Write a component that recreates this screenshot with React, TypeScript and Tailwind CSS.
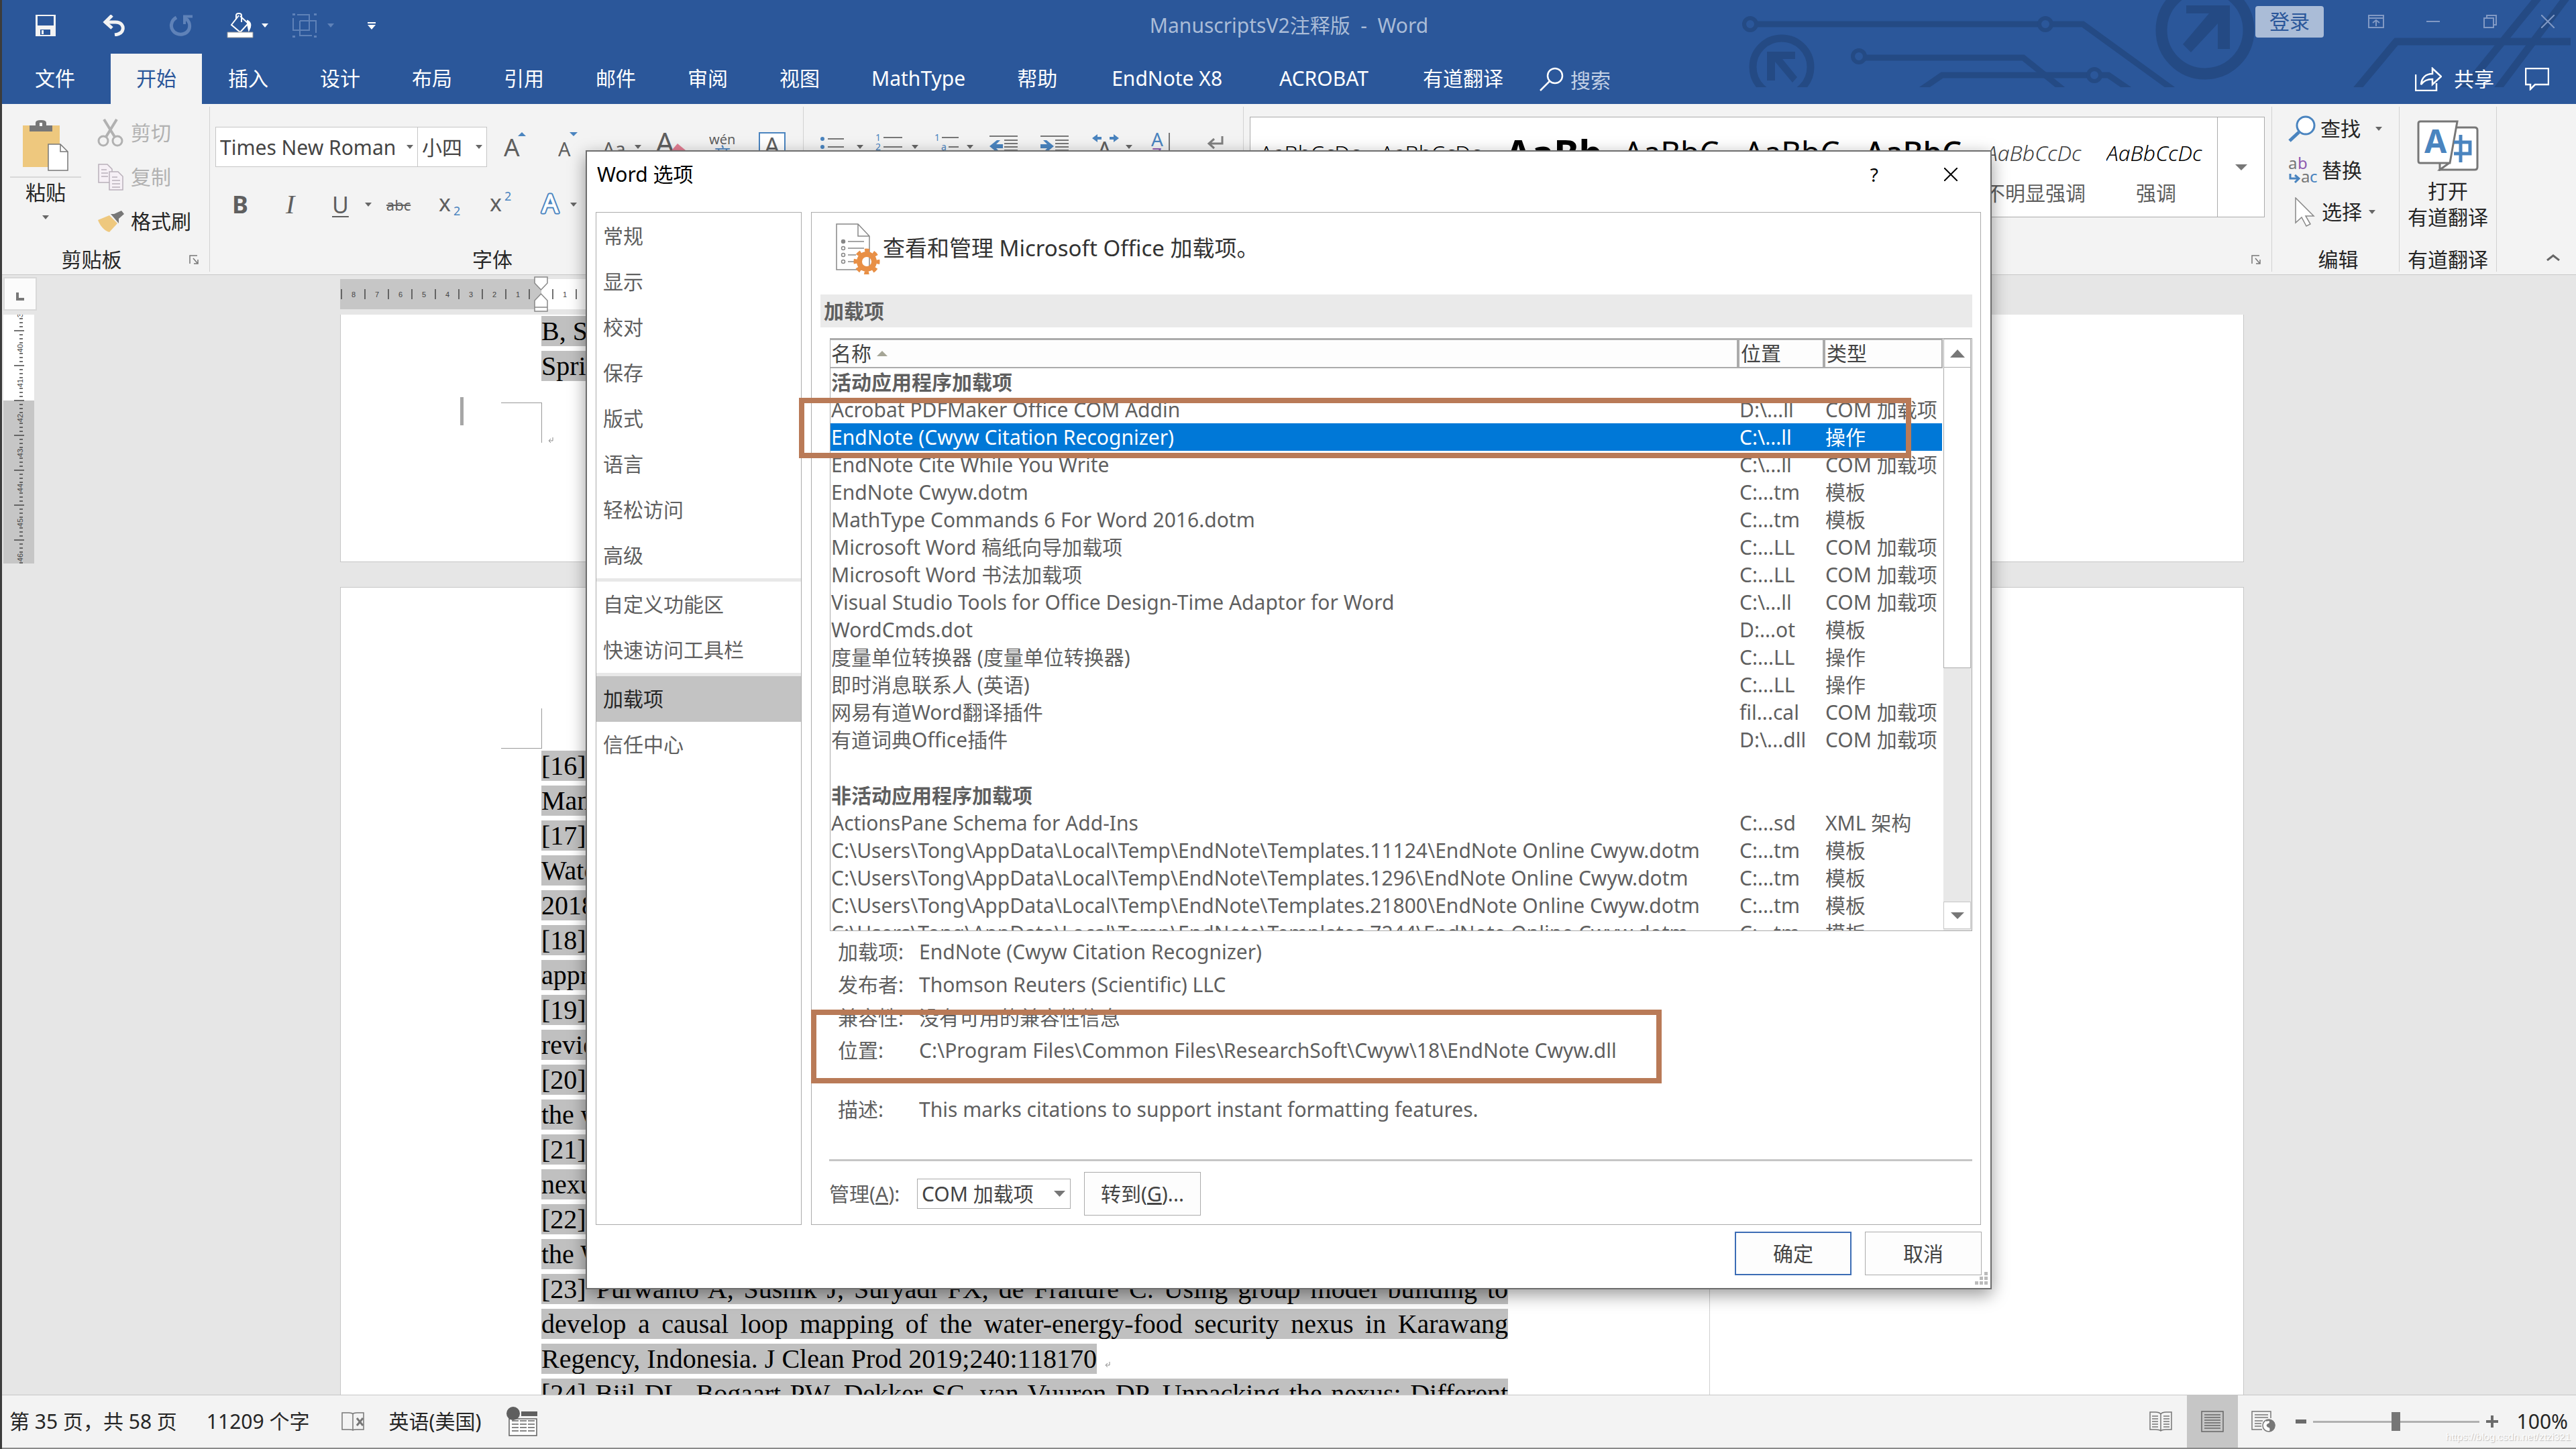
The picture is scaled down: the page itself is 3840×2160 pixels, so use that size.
import { useState } from "react"
import type { ReactNode } from "react"

const ui = "font-['Noto_Sans','Noto_Sans_CJK_SC',sans-serif]"

const tabs = ["插入", "设计", "布局", "引用", "邮件", "审阅", "视图", "MathType", "帮助", "EndNote X8", "ACROBAT", "有道翻译"]

const navGroups = [
  ["常规", "显示", "校对", "保存", "版式", "语言", "轻松访问", "高级"],
  ["自定义功能区", "快速访问工具栏"],
  ["加载项", "信任中心"],
]

const activeAddins = [
  ["Acrobat PDFMaker Office COM Addin", "D:\\...ll", "COM 加载项"],
  ["EndNote (Cwyw Citation Recognizer)", "C:\\...ll", "操作"],
  ["EndNote Cite While You Write", "C:\\...ll", "COM 加载项"],
  ["EndNote Cwyw.dotm", "C:...tm", "模板"],
  ["MathType Commands 6 For Word 2016.dotm", "C:...tm", "模板"],
  ["Microsoft Word 稿纸向导加载项", "C:...LL", "COM 加载项"],
  ["Microsoft Word 书法加载项", "C:...LL", "COM 加载项"],
  ["Visual Studio Tools for Office Design-Time Adaptor for Word", "C:\\...ll", "COM 加载项"],
  ["WordCmds.dot", "D:...ot", "模板"],
  ["度量单位转换器 (度量单位转换器)", "C:...LL", "操作"],
  ["即时消息联系人 (英语)", "C:...LL", "操作"],
  ["网易有道Word翻译插件", "fil...cal", "COM 加载项"],
  ["有道词典Office插件", "D:\\...dll", "COM 加载项"],
]

const inactiveAddins = [
  ["ActionsPane Schema for Add-Ins", "C:...sd", "XML 架构"],
  ["C:\\Users\\Tong\\AppData\\Local\\Temp\\EndNote\\Templates.11124\\EndNote Online Cwyw.dotm", "C:...tm", "模板"],
  ["C:\\Users\\Tong\\AppData\\Local\\Temp\\EndNote\\Templates.1296\\EndNote Online Cwyw.dotm", "C:...tm", "模板"],
  ["C:\\Users\\Tong\\AppData\\Local\\Temp\\EndNote\\Templates.21800\\EndNote Online Cwyw.dotm", "C:...tm", "模板"],
  ["C:\\Users\\Tong\\AppData\\Local\\Temp\\EndNote\\Templates.7244\\EndNote Online Cwyw.dotm", "C:...tm", "模板"],
]

const references = [
  "[16]", "Man", "[17]", "Water", "2018;", "[18]", "appro", "[19]", "review", "[20]", "the w", "[21]", "nexus", "[22]", "the W",
]

function Arrow({ className = "text-[#666]" }: { className?: string }) {
  return (
    <svg className={"h-[6px] w-[10px] shrink-0 " + className} viewBox="0 0 10 6" fill="currentColor">
      <path d="M0 0h10L5 6z" />
    </svg>
  )
}

function Letter({ x, y, size, fill = "#5f5f5f", children, bold, italic }: any) {
  return (
    <text x={x} y={y} fontSize={size} fill={fill} fontFamily="Noto Sans, Noto Sans CJK SC, sans-serif" fontWeight={bold ? 700 : 400} fontStyle={italic ? "italic" : "normal"}>
      {children}
    </text>
  )
}

function Tool({ label, className, children }: { label: string; className: string; children: ReactNode }) {
  return (
    <button aria-label={label} className={"flex h-[60px] shrink-0 items-center " + className}>
      {children}
    </button>
  )
}

function HeaderArt() {
  return (
    <svg className="absolute right-0 top-0 h-[130px] w-[1250px]" viewBox="2590 0 1250 130" fill="none" stroke="#244a84" strokeWidth="9">
      <circle cx="2609" cy="36" r="9" strokeWidth="6" />
      <path d="M2618 36H3040M3058 36H3105L3240 134" />
      <circle cx="3049" cy="36" r="9" strokeWidth="6" />
      <circle cx="2656" cy="100" r="43" strokeWidth="11" />
      <path d="M2634 77h42v11h-19l22 27-7 8-26-31v28h-12z" fill="#244a84" stroke="none" />
      <circle cx="2771" cy="84" r="9" strokeWidth="6" />
      <path d="M2780 86H3016L3076 134" />
      <path d="M2863 134L2895 112H3113M3131 112H3143L3175 134" />
      <circle cx="3122" cy="112" r="9" strokeWidth="6" />
      <circle cx="3287" cy="45" r="65" strokeWidth="17" />
      <path d="M3259 8h65v65h-18V35l-40 43-12-12 39-46h-34z" fill="#244a84" stroke="none" />
      <path d="M3512 134L3572 62H3832M3672 134L3784 -4M3722 134L3826 -4" strokeWidth="11" />
    </svg>
  )
}

function TitleBar() {
  return (
    <header className="relative shrink-0 bg-[#2b579a] text-white">
      <HeaderArt />
      <div className="relative grid h-20 grid-cols-[1fr_auto_1fr] items-center pb-1">
        <div className="flex items-center pl-[49px]">
          <button aria-label="保存">
            <svg className="h-8 w-8" viewBox="0 0 32 32"><path d="M1 0h30v32H1z" fill="#f3f3f3" /><path d="M4 2h24v14H4zM8 22h15v8H8z" fill="#2b579a" /><path d="M10 23h3v6h-3z" fill="#f3f3f3" /></svg>
          </button>
          <button aria-label="撤消" className="ml-[68px]">
            <svg className="h-8 w-9" viewBox="0 0 36 32" fill="none" stroke="#f3f3f3" strokeWidth="5"><path d="M4 11H20C30 11 32 18 31 22 30 27 26 29 19 30" /><path d="M15 1L5 11L15 20" /></svg>
          </button>
          <button aria-label="恢复" className="ml-[64px]">
            <svg className="h-8 w-9" viewBox="0 0 36 32" fill="none" stroke="#5f82b8" strokeWidth="5"><path d="M11 4C2 9 1 20 8 26 16 32 27 29 30 21 32 14 29 8 24 5" /><path d="M35 2.500H23V14" strokeWidth="4" /></svg>
          </button>
          <button aria-label="填充" className="ml-[50px] flex items-center gap-3">
            <svg className="h-[38px] w-[40px]" viewBox="0 0 40 38" fill="none" stroke="#fff" strokeWidth="2"><path d="M14 10V4c0-4 8-4 8 0v10M18 4L7 18l13 11 12-13L20 5" /><path d="M31 12c6 3 5 9 2 14l-2-9z" fill="#fff" /><path d="M1 29h38v8H1z" fill="#fff" stroke="#999" strokeWidth="1" /></svg>
            <Arrow className="text-white" />
          </button>
          <button aria-label="组合" className="ml-[36px] flex items-center gap-4">
            <svg className="h-9 w-9" viewBox="0 0 36 36" fill="none" stroke="#5f82b8" strokeWidth="2"><path d="M1 7v18h24V2H7M11 11h24v18M11 11v22h18" /><path d="M0 1h4M32 1h4M0 35h4M32 35h4" strokeWidth="4" /></svg>
            <Arrow className="text-[#5f82b8]" />
          </button>
          <button aria-label="自定义快速访问工具栏" className="ml-[50px]">
            <svg className="h-[11px] w-3" viewBox="0 0 12 11" fill="#fff"><path d="M0 0h12v2H0zM0 4h12L6 11z" /></svg>
          </button>
        </div>
        <h1 className="whitespace-pre text-[30px] leading-10 text-[#aabcd7]">ManuscriptsV2注释版  -  Word</h1>
        <div className="flex items-center justify-end pr-8 text-[#8199c4]">
          <button className="mb-3 h-[47px] w-[102px] rounded-sm bg-[#aabcd7] text-[30px] leading-10 text-[#2b579a]">登录</button>
          <div className="mb-3 flex items-center">
            <svg className="ml-[66px] h-5 w-6" viewBox="0 0 24 20" fill="none" stroke="currentColor" strokeWidth="2"><path d="M1 1h22v18H1zM1 5h22M12 17V9M7 12l5-4 5 4" /></svg>
            <svg className="ml-[63px] h-5 w-5" viewBox="0 0 20 20" stroke="currentColor" strokeWidth="2"><path d="M0 10h20" /></svg>
            <svg className="ml-[65px] h-5 w-5" viewBox="0 0 20 20" fill="none" stroke="currentColor" strokeWidth="2"><path d="M1 5h14v14H1zM5 5V1h14v14h-4" /></svg>
            <svg className="ml-[66px] h-5 w-5" viewBox="0 0 20 20" stroke="currentColor" strokeWidth="2"><path d="M0 0l20 20M20 0L0 20" /></svg>
          </div>
        </div>
      </div>
      <nav className="relative flex h-[75px] items-stretch text-[30px] leading-10">
        <button className="w-[162px] pb-0.5 pr-1">文件</button>
        <button className="mr-px bg-[#f3f3f3] px-[38px] pb-0.5 text-[#2b579a]">开始</button>
        <div className="flex gap-px">
          {tabs.map((tab) => (
            <button key={tab} className={"pb-0.5 " + (tab.length > 6 && tab !== "MathType" ? "px-[42px]" : "px-[38px]")}>{tab}</button>
          ))}
        </div>
        <button className="flex items-center gap-2.5 pl-4 text-[#c3d0e5]">
          <svg className="h-9 w-9" viewBox="0 0 36 36" fill="none" stroke="#fff" strokeWidth="2.500"><circle cx="23" cy="13" r="11" /><path d="M15 21L1 35" /></svg>
          <span className="pt-1">搜索</span>
        </button>
        <div className="ml-auto flex items-center gap-[46px] pr-10">
          <button className="flex items-center gap-[18px]">
            <svg className="h-9 w-10" viewBox="0 0 40 36" fill="none" stroke="#fff" strokeWidth="2.500"><path d="M1 11v24h31V24" /><path d="M9 26c1-10 7-16 17-16V2l13 12-13 12v-8c-8 0-13 2-17 8z" /></svg>
            共享
          </button>
          <svg className="h-[34px] w-9" viewBox="0 0 36 34" fill="none" stroke="#fff" strokeWidth="2.500"><path d="M1 1h34v24H15l-7 7v-7H1z" /></svg>
        </div>
      </nav>
    </header>
  )
}

function Group({ label, className, launcher, children }: { label: string; className: string; launcher?: boolean; children: ReactNode }) {
  return (
    <section className={"my-1 flex flex-col border-r border-[#d2d2d2] " + className}>
      <div className="min-h-0 flex-1">{children}</div>
      <div className="flex h-9 items-center justify-end pr-4">
        <h2 className="flex-1 text-center text-[30px] leading-9">{label}</h2>
        {launcher && (
          <svg className="ml-3 h-3.5 w-3.5" viewBox="0 0 14 14" fill="none" stroke="#777" strokeWidth="1.500"><path d="M1 13V1h11M6 5l6 7M13 7v6H7" /></svg>
        )}
      </div>
    </section>
  )
}

function Lines({ x, w, ys }: { x: number; w: number; ys: number[] }) {
  return <path d={ys.map((y) => `M${x} ${y}h${w}`).join("")} stroke="#777" strokeWidth="2" />
}

function Ribbon() {
  const [font, setFont] = useState("Times New Roman")
  const [size, setSize] = useState("小四")
  return (
    <div className="flex h-[255px] shrink-0 border-b border-[#c8c8c8] bg-[#f3f3f3] text-[#262626]">
      <Group label="剪贴板" className="w-[310px]" launcher>
        <div className="flex">
          <button className="flex w-[106px] shrink-0 flex-col items-center pt-5 ml-3 text-[30px]">
            <svg className="h-[76px] w-[70px]" viewBox="0 0 70 76"><path d="M1 8h55v62H1z" fill="#eec87e" /><path d="M11 8h9V4q0-4 8-4t8 4v4h9v9H11z" fill="#777" /><path d="M26 4h4v5h-4z" fill="#fff" /><path d="M39 36h18l11 11v28H39z" fill="#fff" stroke="#777" strokeWidth="1.500" /><path d="M57 36v11h11" fill="none" stroke="#777" strokeWidth="1.500" /></svg>
            <span className="mt-2 w-full border-t-2 border-[#d8d8d8] leading-[44px]">粘贴</span>
            <span className="mt-3"><Arrow /></span>
          </button>
          <div className="pt-1.5 pl-6 text-[30px] leading-10">
            <button className="flex h-[66px] items-center gap-2.5 text-[#b1b1b1]">
              <svg className="h-[42px] w-[40px]" viewBox="0 0 40 42" fill="none" stroke="#b1b1b1" strokeWidth="3"><circle cx="9" cy="33" r="7" /><circle cx="30" cy="33" r="7" /><path d="M10 1L26 27M29 1L13 27" strokeWidth="4" /></svg>
              剪切
            </button>
            <button className="flex h-[66px] items-center gap-2.5 text-[#b1b1b1]">
              <svg className="h-10 w-10" viewBox="0 0 40 40" fill="#f6f0f6" stroke="#b9b0ba" strokeWidth="1.500"><path d="M2 1h13l7 7v20H2z" /><path d="M6 9h8M6 14h10M6 19h10" /><path d="M18 12h13l7 7v20H18z" /><path d="M22 20h8M22 25h12M22 30h12M22 35h12" /></svg>
              复制
            </button>
            <button className="flex h-[66px] items-center gap-2.5">
              <svg className="h-8 w-10" viewBox="0 0 40 32"><path d="M1 14l17-7 12 12-12 13C10 30 4 22 1 14z" fill="#eec87e" /><path d="M20 5l5 0L36 0l4 5-8 7v7z" fill="#777" /></svg>
              格式刷
            </button>
          </div>
        </div>
      </Group>
      <Group label="字体" className="w-[885px]" launcher>
        <div className="flex flex-col gap-[26px] pl-2 pt-[30px]">
          <div className="flex">
            <div className="flex h-[60px] w-[302px] items-center border border-[#c6c6c6] bg-white pr-1.5">
              <input aria-label="字体" value={font} onChange={(e) => setFont(e.target.value)} className="w-0 flex-1 pl-1.5 text-[30px] text-[#444]" />
              <Arrow />
            </div>
            <div className="flex h-[60px] w-[103px] items-center border border-l-0 border-[#c6c6c6] bg-white pr-1.5">
              <input aria-label="字号" value={size} onChange={(e) => setSize(e.target.value)} className="w-0 flex-1 pl-1.5 text-[30px] text-[#444]" />
              <Arrow />
            </div>
            <Tool label="增大字号" className="ml-[25px]">
              <svg className="h-11 w-9" viewBox="0 0 36 44"><Letter x="0" y="36" size="37">A</Letter><path d="M21 6l6-6 6 6z" fill="#4a84bf" /></svg>
            </Tool>
            <Tool label="减小字号" className="ml-[45px]">
              <svg className="h-11 w-8" viewBox="0 0 32 44"><Letter x="0" y="36" size="29">A</Letter><path d="M17 0h12l-6 6z" fill="#4a84bf" /></svg>
            </Tool>
            <Tool label="更改大小写" className="ml-[34px] gap-3">
              <svg className="h-11 w-9" viewBox="0 0 36 44"><Letter x="0" y="36" size="29">Aa</Letter></svg>
              <Arrow />
            </Tool>
            <Tool label="清除格式" className="ml-[21px]">
              <svg className="h-12 w-12" viewBox="0 0 48 48"><Letter x="0" y="34" size="44">A</Letter><path d="M20 34l13-15 12 10-12 15z" fill="#e17d92" /></svg>
            </Tool>
            <Tool label="拼音指南" className="ml-[32px]">
              <svg className="h-12 w-10" viewBox="0 0 40 48"><Letter x="0" y="20" size="20">wén</Letter><Letter x="8" y="42" size="24" fill="#4a84bf">文</Letter></svg>
            </Tool>
            <Tool label="字符边框" className="ml-[34px]">
              <svg className="h-11 w-10" viewBox="0 0 40 44"><path d="M1 1h38v42H1z" fill="#fff" stroke="#4a84bf" strokeWidth="2" /><Letter x="8" y="34" size="37">A</Letter></svg>
            </Tool>
          </div>
          <div className="flex items-center text-[#5f5f5f]">
            <Tool label="加粗" className="ml-[25px] w-[28px] text-[36px] font-bold">B</Tool>
            <Tool label="倾斜" className="ml-[52px] w-[24px] font-['Liberation_Serif',serif] text-[40px] italic">I</Tool>
            <Tool label="下划线" className="ml-[45px] gap-6 text-[34px]">
              <u className="underline decoration-2 underline-offset-4">U</u>
              <Arrow />
            </Tool>
            <Tool label="删除线" className="ml-[22px] text-[22px]"><s>abc</s></Tool>
            <Tool label="下标" className="ml-[42px]">
              <svg className="h-11 w-9" viewBox="0 0 36 44"><Letter x="0" y="32" size="34">x</Letter><Letter x="22" y="38" size="18" fill="#4a84bf">2</Letter></svg>
            </Tool>
            <Tool label="上标" className="ml-[40px]">
              <svg className="h-11 w-9" viewBox="0 0 36 44"><Letter x="0" y="32" size="34">x</Letter><Letter x="22" y="16" size="18" fill="#4a84bf">2</Letter></svg>
            </Tool>
            <Tool label="文本效果" className="ml-[38px] gap-3.5">
              <svg className="h-11 w-8" viewBox="0 0 32 44"><text x="4" y="34" fontSize="38" fill="#4a84bf" stroke="#4a84bf" strokeWidth="5" strokeLinejoin="round" fontFamily="Noto Sans, sans-serif">A</text><text x="4" y="34" fontSize="38" fill="#fff" stroke="#fff" strokeWidth="1" fontFamily="Noto Sans, sans-serif">A</text></svg>
              <Arrow />
            </Tool>
          </div>
        </div>
      </Group>
      <Group label="段落" className="w-[656px]">
        <div className="flex pl-[25px] pt-[30px]">
          <Tool label="项目符号" className="gap-[18px]">
            <svg className="h-9 w-9" viewBox="0 0 36 36" fill="#4a84bf"><circle cx="3" cy="6" r="3" /><circle cx="3" cy="18" r="3" /><circle cx="3" cy="30" r="3" /><Lines x={11} w={24} ys={[6, 18, 30]} /></svg>
            <Arrow />
          </Tool>
          <Tool label="编号" className="ml-[18px] gap-[14px]">
            <svg className="h-10 w-10" viewBox="0 0 40 40"><Letter x="0" y="11" size="14" fill="#4a84bf">1</Letter><Letter x="0" y="25" size="14" fill="#4a84bf">2</Letter><Lines x={12} w={28} ys={[6, 20, 34]} /></svg>
            <Arrow />
          </Tool>
          <Tool label="多级列表" className="ml-[24px] gap-[12px]">
            <svg className="h-10 w-9" viewBox="0 0 36 40"><Letter x="0" y="11" size="14" fill="#4a84bf">1</Letter><Letter x="10" y="25" size="14" fill="#4a84bf">a</Letter><Lines x={11} w={25} ys={[6]} /><Lines x={21} w={15} ys={[20]} /></svg>
            <Arrow />
          </Tool>
          <Tool label="减少缩进量" className="ml-[24px]">
            <svg className="h-9 w-[42px]" viewBox="0 0 42 36"><Lines x={0} w={42} ys={[2, 33]} /><Lines x={22} w={20} ys={[8, 13, 18, 23]} /><path d="M0 17L11 8h5l-6 6h10v6H10l6 6h-5z" fill="#4a84bf" /></svg>
          </Tool>
          <Tool label="增加缩进量" className="ml-[34px]">
            <svg className="h-9 w-[42px]" viewBox="0 0 42 36"><Lines x={0} w={42} ys={[2, 33]} /><Lines x={22} w={20} ys={[8, 13, 18, 23]} /><path d="M20 17L9 8H4l6 6H0v6h10l-6 6h5z" fill="#4a84bf" /></svg>
          </Tool>
          <Tool label="中文版式" className="ml-[35px] gap-[10px]">
            <svg className="h-10 w-10" viewBox="0 0 40 40"><path d="M0 7l8-6v4h6v4H8v4zM40 7l-8-6v4h-6v4h6v4z" fill="#4a84bf" /><Letter x="7" y="38" size="36">A</Letter></svg>
            <Arrow />
          </Tool>
          <Tool label="排序" className="ml-[28px]">
            <svg className="h-11 w-8" viewBox="0 0 32 44"><Letter x="0" y="21" size="28" fill="#4a84bf">A</Letter><Letter x="1" y="42" size="26" fill="#8e5bb0">Z</Letter><path d="M27 1v42" stroke="#777" strokeWidth="2" /></svg>
          </Tool>
          <Tool label="显示编辑标记" className="ml-[40px]">
            <svg className="h-9 w-9" viewBox="0 0 36 36" fill="none" stroke="#808080" strokeWidth="3"><path d="M34 2v11H16M22 6l-8 7 8 7M4 24l8 8" /></svg>
          </Tool>
        </div>
      </Group>
      <Group label="样式" className="min-w-0 flex-1" launcher>
        <div className="flex pl-[9px] pr-2.5 pt-[15px]">
          <div className="flex h-[150px] min-w-0 flex-1 overflow-hidden border border-[#ababab] bg-white text-black">
            <div className="w-[180px] shrink-0 overflow-hidden pl-3.5 pt-[29px] text-[32px] font-light leading-[48px]">AaBbCcDc</div>
            <div className="w-[180px] shrink-0 overflow-hidden pl-3.5 pt-[29px] text-[32px] font-light leading-[48px]">AaBbCcDc</div>
            <div className="w-[180px] shrink-0 overflow-hidden pl-5 pt-4 text-[56px] font-bold leading-[72px]">AaBb</div>
            <div className="w-[180px] shrink-0 overflow-hidden pl-4 pt-[21px] text-[46px] leading-[60px]">AaBbC</div>
            <div className="w-[180px] shrink-0 overflow-hidden pl-4 pt-[21px] text-[46px] leading-[60px]">AaBbC</div>
            <div className="w-[180px] shrink-0 overflow-hidden pl-4 pt-[21px] text-[46px] font-medium leading-[60px]">AaBbC</div>
            <div className="w-[180px] shrink-0 pt-[29px] text-center">
              <p className="ml-4 w-[152px] overflow-hidden text-left text-[32px] font-light italic leading-[48px] text-[#404040]">AaBbCcDc</p>
              <p className="mt-2 text-[30px] leading-[56px] text-[#5f5f5f]">不明显强调</p>
            </div>
            <div className="w-[180px] shrink-0 pt-[29px] text-center">
              <p className="ml-4 w-[154px] overflow-hidden text-left text-[32px] font-light italic leading-[48px]">AaBbCcDc</p>
              <p className="mt-2 text-[30px] leading-[56px] text-[#5f5f5f]">强调</p>
            </div>
          </div>
          <button aria-label="其他样式" className="flex h-[150px] w-[70px] items-center justify-center border border-l-0 border-[#ababab] bg-white">
            <svg className="h-[9px] w-[18px]" viewBox="0 0 18 9" fill="#777"><path d="M0 0h18L9 9z" /></svg>
          </button>
        </div>
      </Group>
      <Group label="编辑" className="w-[190px] pl-6">
        <div className="pt-0.5 text-[30px] leading-10">
          <button className="flex h-[62px] items-center gap-1.5">
            <svg className="h-10 w-[42px]" viewBox="0 0 42 40" fill="#fff" stroke="#4a84bf"><circle cx="26" cy="15" r="13" strokeWidth="3" /><path d="M16 25L2 38" strokeWidth="5" /></svg>
            查找
            <span className="ml-4"><Arrow /></span>
          </button>
          <button className="flex h-[62px] items-center gap-1.5">
            <svg className="h-[42px] w-[44px]" viewBox="0 0 44 42"><Letter x="0" y="19" size="24" fill="#777">a</Letter><Letter x="14" y="19" size="24" fill="#8e5bb0">b</Letter><Letter x="19" y="39" size="24" fill="#777">a</Letter><Letter x="32" y="39" size="24" fill="#4a84bf">c</Letter><path d="M3 26v7h12M10 28l6 5-6 6" fill="none" stroke="#4a84bf" strokeWidth="3" /></svg>
            替换
          </button>
          <button className="flex h-[62px] items-center gap-1.5">
            <svg className="h-[44px] w-[44px]" viewBox="0 0 44 44"><path d="M11 1v37l9-8 7 13 6-3-7-12h12z" fill="#fff" stroke="#888" strokeWidth="1.500" /></svg>
            选择
            <span className="ml-1"><Arrow /></span>
          </button>
        </div>
      </Group>
      <section className="my-1 flex w-[145px] flex-col items-center border-r border-[#d2d2d2] pt-5 text-[30px]">
        <svg className="h-[76px] w-[92px]" viewBox="0 0 92 76" strokeWidth="3"><path d="M56 11h30q4 0 4 4v55q0 4-4 4H34l14-12z" fill="#fff" stroke="#777" /><path d="M5 2h55L49 64H5q-3 0-3-3V5q0-3 3-3zM34 64v10l14-10" fill="#fff" stroke="#777" /><Letter x="11" y="49" size="48" bold fill="#4a84bf">A</Letter><path d="M65 22v41M55 33h24v17H55" fill="none" stroke="#4a84bf" strokeWidth="5" /></svg>
        <button className="mt-[10px] leading-[39px]">打开<br />有道翻译</button>
        <h2 className="mt-auto leading-9">有道翻译</h2>
      </section>
      <button aria-label="折叠功能区" className="ml-[74px] mr-6 mb-5 self-end">
        <svg className="h-2.5 w-5" viewBox="0 0 20 10" fill="none" stroke="#666" strokeWidth="3"><path d="M1 9l9-7 9 7" /></svg>
      </button>
    </div>
  )
}

function VerticalRuler() {
  const marks = [39, 40, 41, 42, 43, 44, 45, 46]
  return (
    <svg className="h-[371px] w-[46px]" viewBox="0 0 46 371">
      <path d="M0 0h46v128H0z" fill="#fff" />
      <path d="M0 128h46v243H0z" fill="#c6c6c6" />
      {marks.map((m, i) => (
        <g key={m}>
          <path d={`M16 ${24 + i * 52}h15`} stroke="#444" strokeWidth="1.500" />
          <path d={[-20, -14, -8, 8, 14, 20].map((d) => `M24 ${i * 52 - 2 + d}h5`).join("")} stroke="#444" strokeWidth="1.500" />
          <text transform={`translate(29 ${i * 52 - 2}) rotate(-90)`} fontSize="11" textAnchor="middle" fill="#444" fontFamily="Liberation Sans, sans-serif">{m}</text>
        </g>
      ))}
    </svg>
  )
}

function HorizontalRuler() {
  const marks = [8, 7, 6, 5, 4, 3, 2, 1]
  return (
    <svg className="block h-[54px] w-[2041px]" viewBox="0 0 2041 54">
      <path d="M0 5h300v45H0z" fill="#c6c6c6" />
      <path d="M300 5h1440v45H300z" fill="#fff" />
      {marks.map((m, i) => (
        <text key={m} x={20 + i * 35} y="32" fontSize="11" textAnchor="middle" fill="#444" fontFamily="Liberation Sans, sans-serif">{m}</text>
      ))}
      <text x="335" y="32" fontSize="11" textAnchor="middle" fill="#444" fontFamily="Liberation Sans, sans-serif">1</text>
      <path d={[2, 37, 72, 107, 142, 177, 212, 247, 282, 317, 352].map((x) => `M${x} 20v15`).join("")} stroke="#444" strokeWidth="1.500" />
      <path d="M290 2h19v9l-9.500 10L290 11zM290 53v-16l9.500-10 9.500 10v16zM290 47h19" fill="#fff" stroke="#888" strokeWidth="1.500" />
    </svg>
  )
}

function Line({ children, justify }: { children: ReactNode; justify?: boolean }) {
  return (
    <p className={justify ? "[text-align-last:justify]" : ""}>
      <span className="bg-[#c0c0c0]">{children}</span>
    </p>
  )
}

function DocumentArea() {
  return (
    <main className="flex min-h-0 flex-1 overflow-hidden bg-[#e6e6e6]">
      <div className="w-[52px] shrink-0 pl-0.5 pt-[3px]">
        <div className="mb-1.5 flex h-[50px] w-[50px] items-center justify-center border-2 border-[#d9d9d9] bg-[#fbfbfb]">
          <span className="mt-2 h-3 w-3 border-b-4 border-l-4 border-[#777]" />
        </div>
        <VerticalRuler />
      </div>
      <div className="flex flex-1 justify-center overflow-hidden">
        <div className="w-[2838px] shrink-0 mr-[43px]">
          <div className="h-[59px] pt-[1px]"><HorizontalRuler /></div>
          <div className="h-[369px] overflow-hidden border border-t-0 border-[#c6c6c6] bg-white">
            <div className="relative -mt-px h-full w-[2041px] font-['Liberation_Serif',serif] text-[40px] leading-[52px] text-black">
              <div className="ml-[299px] w-[1440px]">
                <Line>B, Smith</Line>
                <Line>Springer</Line>
              </div>
              <div className="ml-[239px] mt-7 h-[60px] w-[61px] border-r border-t border-[#999]" />
              <span className="absolute left-[178px] top-[124px] h-[42px] w-[5px] bg-[#a6a6a6]" />
              <svg className="absolute left-[309px] top-[184px] h-2 w-2" viewBox="0 0 8 8" fill="none" stroke="#888"><path d="M7 0v5H1M4 2L1 5l3 3" /></svg>
            </div>
          </div>
          <div className="mt-[37px] border border-[#c6c6c6] bg-white">
            <div className="relative w-[2041px] border-r border-[#d0d0d0] pt-[180px] font-['Liberation_Serif',serif] text-[40px] leading-[52px] text-black">
              <div className="ml-[239px] h-[60px] w-[61px] border-b border-r border-[#999]" />
              <div className="ml-[299px] w-[1441px]">
                {references.map((line) => (
                  <Line key={line}>{line}</Line>
                ))}
                <Line justify>[23] Purwanto A, Sušnik J, Suryadi FX, de Fraiture C. Using group model building to</Line>
                <Line justify>develop a causal loop mapping of the water-energy-food security nexus in Karawang</Line>
                <div className="flex items-center gap-3">
                  <Line>Regency, Indonesia. J Clean Prod 2019;240:118170</Line>
                  <svg className="mt-4 h-2 w-2" viewBox="0 0 8 8" fill="none" stroke="#888"><path d="M7 0v5H1M4 2L1 5l3 3" /></svg>
                </div>
                <Line justify>[24] Bijl DL, Bogaart PW, Dekker SC, van Vuuren DP. Unpacking the nexus: Different</Line>
              </div>
            </div>
          </div>
        </div>
      </div>
    </main>
  )
}

function StatusBar() {
  const [zoom, setZoom] = useState(50)
  return (
    <footer className="flex h-[81px] shrink-0 items-center border-b-2 border-t border-b-[#8a8a8a] border-t-[#c6c6c6] bg-[#f3f3f3] pl-[11px] text-[30px] leading-10 text-[#262626]">
      <span>第 35 页，共 58 页</span>
      <span className="ml-[44px]">11209 个字</span>
      <svg className="ml-[48px] h-7 w-[34px]" viewBox="0 0 34 28" fill="none" stroke="#777" strokeWidth="1.500"><path d="M1 1h10q5 0 6 2 1-2 6-2h10v25H23q-5 0-6 1-1-1-6-1H1zM17 3v24" /><path d="M23 9l9 11M32 9l-9 11" strokeWidth="3" /></svg>
      <span className="ml-[36px]">英语(美国)</span>
      <svg className="ml-[38px] h-11 w-[46px]" viewBox="0 0 46 44"><path d="M4 18h41v25H4z" fill="#fff" stroke="#5f5f5f" strokeWidth="1.500" /><path d="M22 7h24v7H22z" fill="#5f5f5f" /><circle cx="10" cy="10" r="10" fill="#5f5f5f" /><path d="M8 21h10M20 21h10M32 21h10M8 26h10M20 26h10M32 26h10M8 31h10M20 31h10M32 31h10M8 36h10M20 36h10M32 36h10" stroke="#5f5f5f" strokeWidth="1.500" /></svg>
      <div className="ml-auto flex h-full items-center pr-3">
        <button aria-label="阅读视图" className="mr-[22px]">
          <svg className="h-[30px] w-[34px]" viewBox="0 0 34 30" fill="none" stroke="#777" strokeWidth="1.500"><path d="M1 1h8q6 0 8 3 2-3 8-3h8v26h-8q-6 0-8 2-2-2-8-2H1zM17 4v25" /><path d="M4 7h9M4 11h9M4 15h9M4 19h9M4 23h9M21 7h9M21 11h9M21 15h9M21 19h9M21 23h9" /></svg>
        </button>
        <button aria-label="页面视图" className="flex h-full w-[76px] items-center justify-center bg-[#c6c6c6]">
          <svg className="h-8 w-[34px]" viewBox="0 0 34 32" fill="none" stroke="#666" strokeWidth="1.500"><path d="M1 1h32v30H1zM5 6h24M5 10h24M5 14h24M5 18h24M5 22h24M5 26h24" /></svg>
        </button>
        <button aria-label="Web 版式视图" className="ml-[20px]">
          <svg className="h-8 w-9" viewBox="0 0 36 32" fill="none" stroke="#777" strokeWidth="1.500"><path d="M16 28H1V1h28v10M5 6h20M5 10h20M5 15h12M5 19h10M5 23h10" /><circle cx="26" cy="22" r="9" fill="#fff" /><path d="M22 15q8-2 5 4-6 2-2 5 4 0 3 6 9-5 6-12-5-6-12-3z" fill="#777" /></svg>
        </button>
        <button aria-label="缩小" className="ml-[30px] h-1.5 w-4 bg-[#6b6b6b]" />
        <input aria-label="显示比例" type="range" value={zoom} onChange={(e) => setZoom(Number(e.target.value))} className="ml-2.5 h-8 w-[248px] appearance-none bg-transparent [&::-webkit-slider-runnable-track]:h-[3px] [&::-webkit-slider-runnable-track]:bg-[#b0b0b0] [&::-webkit-slider-thumb]:-mt-[13px] [&::-webkit-slider-thumb]:h-7 [&::-webkit-slider-thumb]:w-[13px] [&::-webkit-slider-thumb]:appearance-none [&::-webkit-slider-thumb]:bg-[#767676]" />
        <button aria-label="放大" className="ml-2.5">
          <svg className="h-[18px] w-[18px]" viewBox="0 0 18 18" stroke="#6b6b6b" strokeWidth="4"><path d="M0 9h18M9 0v18" /></svg>
        </button>
        <div className="relative ml-7">
          100%
          <span className="absolute -right-1 top-[33px] font-['Liberation_Sans',sans-serif] text-[15px] leading-5 text-white [text-shadow:1px_1px_1px_#bbb]">https://blog.csdn.net/ztzi321</span>
        </div>
      </div>
    </footer>
  )
}

function AddinTable() {
  const [selected, setSelected] = useState("EndNote (Cwyw Citation Recognizer)")
  const rows = (list: string[][]) =>
    list.map((row) => (
      <tr key={row[0]} onClick={() => setSelected(row[0])} className={row[0] === selected ? "bg-[#0078d7] text-white" : ""}>
        <td className="p-0 pl-px">{row[0]}</td>
        <td className="p-0 pl-0.5">{row[1]}</td>
        <td className="p-0 pl-0.5">{row[2]}</td>
      </tr>
    ))
  return (
    <div className="ml-[27px] mr-3 mt-4 flex h-[884px] overflow-hidden border border-[#ababab]">
      <div className="min-w-0 flex-1 overflow-hidden">
        <table className="w-full table-fixed whitespace-nowrap text-[30px] leading-[41px] text-[#5f5f5f]">
          <thead className="text-[#444]">
            <tr className="h-[42px]">
              <th className="border-b-2 border-r-4 border-t-2 border-[#ababab] bg-[#fdfdfd] p-0 pl-px text-left font-normal leading-[38px]">
                <span className="inline-flex items-center gap-2">
                  名称
                  <svg className="h-2 w-4" viewBox="0 0 16 8" fill="#a5a596"><path d="M0 8h16L8 0z" /></svg>
                </span>
              </th>
              <th className="w-[128px] border-b-2 border-r-4 border-t-2 border-[#ababab] bg-[#fdfdfd] p-0 pl-0.5 text-left font-normal leading-[38px]">位置</th>
              <th className="w-[176px] border-b-2 border-r-2 border-t-2 border-[#ababab] bg-[#fdfdfd] p-0 pl-0.5 text-left font-normal leading-[38px]">类型</th>
            </tr>
          </thead>
          <tbody>
            <tr><th colSpan={3} className="p-0 pl-px text-left font-bold">活动应用程序加载项</th></tr>
            {rows(activeAddins)}
            <tr><td colSpan={3} className="h-[42px] p-0" /></tr>
            <tr><th colSpan={3} className="p-0 pl-px text-left font-bold">非活动应用程序加载项</th></tr>
            {rows(inactiveAddins)}
          </tbody>
        </table>
      </div>
      <div className="flex w-[43px] shrink-0 flex-col border-l border-white bg-[#e8e8e8] pr-px">
        <button aria-label="向上滚动" className="flex h-[43px] shrink-0 items-center justify-center border border-[#ababab] bg-white">
          <svg className="h-3 w-[22px]" viewBox="0 0 22 12" fill="#777"><path d="M0 12h22L11 0z" /></svg>
        </button>
        <div className="h-[448px] border border-t-0 border-[#ababab] bg-white" />
        <button aria-label="向下滚动" className="mt-auto mb-0.5 flex h-[41px] shrink-0 items-center justify-center border border-[#c6c6c6] bg-white">
          <svg className="h-2.5 w-5" viewBox="0 0 20 10" fill="#777"><path d="M0 0h20L10 10z" /></svg>
        </button>
      </div>
    </div>
  )
}

function OptionsDialog() {
  const [page, setPage] = useState("加载项")
  return (
    <div role="dialog" aria-label="Word 选项" className="absolute left-[873px] top-[224px] w-[2096px] border-2 border-[#6e6e6e] bg-white shadow-[0_8px_24px_rgba(0,0,0,0.4)]">
      <div className="flex h-[68px] items-center pl-[15px] pr-[49px] text-[30px] leading-10 text-black">
        <h2>Word 选项</h2>
        <button aria-label="帮助" className="ml-auto text-[28px]">?</button>
        <button aria-label="关闭" className="ml-[98px]">
          <svg className="h-5 w-5" viewBox="0 0 20 20" stroke="#000" strokeWidth="2"><path d="M0 0l20 20M20 0L0 20" /></svg>
        </button>
      </div>
      <div className="mt-[22px] flex gap-[14px] pl-[13px] pr-[14px] text-[30px] leading-[41px] text-[#5f5f5f]">
        <nav className="w-[307px] shrink-0 border border-[#ababab] pt-px">
          {navGroups.map((group, i) => (
            <div key={i} className={i > 0 ? "relative border-t-[5px] border-[#e8e8e8]" : ""}>
              {group.map((item) => (
                <button key={item} onClick={() => setPage(item)} className={"block h-[68px] w-full pb-0.5 pl-2.5 text-left " + (item === page ? "bg-[#c3c3c3] text-[#262626]" : "")}>
                  {item}
                </button>
              ))}
            </div>
          ))}
        </nav>
        <section className="relative min-w-0 flex-1 border border-[#ababab] pb-[13px] pt-4">
          <div className="flex items-center gap-1 pl-9 text-[#333]">
            <svg className="h-[76px] w-[66px]" viewBox="0 0 66 76" fill="none" stroke="#888" strokeWidth="1.500">
              <path d="M1 1h32l17 18v50H1zM33 1v18h17" fill="#fff" />
              <path d="M18 27h24M18 37h24M18 47h12M18 57h12" />
              <circle cx="11" cy="27" r="2.500" fill="#888" /><circle cx="11" cy="37" r="2.500" /><circle cx="11" cy="47" r="2.500" /><circle cx="11" cy="57" r="2.500" />
              <circle cx="46" cy="57" r="11" stroke="#e88f45" strokeWidth="8" />
              <circle cx="46" cy="57" r="17" stroke="#e88f45" strokeWidth="5" strokeDasharray="7 6.350" strokeDashoffset="3.500" />
            </svg>
            <h3 className="pb-1 text-[33px]">查看和管理 Microsoft Office 加载项。</h3>
          </div>
          <h4 className="ml-[13px] mr-3 mt-[30px] h-[49px] bg-[#eaeaea] pl-[5px] font-bold leading-[49px]">加载项</h4>
          <AddinTable />
          <dl className="ml-[39px] mt-[6px] grid grid-cols-[121px_1fr] leading-[49px]">
            <dt>加载项:</dt><dd>EndNote (Cwyw Citation Recognizer)</dd>
            <dt>发布者:</dt><dd>Thomson Reuters (Scientific) LLC</dd>
            <dt>兼容性:</dt><dd>没有可用的兼容性信息</dd>
            <dt>位置:</dt><dd>C:\Program Files\Common Files\ResearchSoft\Cwyw\18\EndNote Cwyw.dll</dd>
            <dt className="mt-[39px]">描述:</dt><dd className="mt-[39px]">This marks citations to support instant formatting features.</dd>
          </dl>
          <div className="ml-[26px] mr-3 mt-[50px] flex items-center border-t-[3px] border-[#c6c6c6] pt-4">
            <label htmlFor="manage" className="w-[131px]">管理(<u>A</u>):</label>
            <div className="relative">
              <select id="manage" className="h-[45px] w-[229px] appearance-none border border-[#ababab] bg-white pl-1.5 text-[#444]">
                <option>COM 加载项</option>
              </select>
              <svg className="pointer-events-none absolute right-2 top-[18px] h-[9px] w-[17px]" viewBox="0 0 17 9" fill="#777"><path d="M0 0h17L8.500 9z" /></svg>
            </div>
            <button className="ml-5 h-[65px] w-[174px] border border-[#ababab] bg-[#fdfdfd] text-[#444]">转到(<u>G</u>)...</button>
          </div>
          <span className="absolute -left-[19px] top-[276px] h-[90px] w-[1658px] border-8 border-[#b97a57]" />
          <span className="absolute -left-px top-[1188px] h-[110px] w-[1268px] border-8 border-[#b97a57]" />
        </section>
      </div>
      <div className="mb-[19px] mt-2.5 flex justify-end gap-5 pr-[13px] text-[30px] leading-10 text-[#444]">
        <button className="h-[65px] w-[174px] border-2 border-[#3c6db5] bg-[#fdfdfd]">确定</button>
        <button className="h-[65px] w-[174px] border border-[#ababab] bg-[#fdfdfd]">取消</button>
      </div>
      <svg className="absolute bottom-1 right-1 h-5 w-5" viewBox="0 0 20 20" fill="#bbb"><path d="M15 0h5v5h-5zM8 7h5v5H8zM15 7h5v5h-5zM1 14h5v5H1zM8 14h5v5H8zM15 14h5v5h-5z" /></svg>
    </div>
  )
}

export default function App() {
  return (
    <div className={"relative flex h-screen flex-col overflow-hidden border-l-[3px] border-[#3c3c3c] " + ui}>
      <TitleBar />
      <Ribbon />
      <DocumentArea />
      <StatusBar />
      <div className="absolute inset-0 -left-[3px]">
        <OptionsDialog />
      </div>
    </div>
  )
}
